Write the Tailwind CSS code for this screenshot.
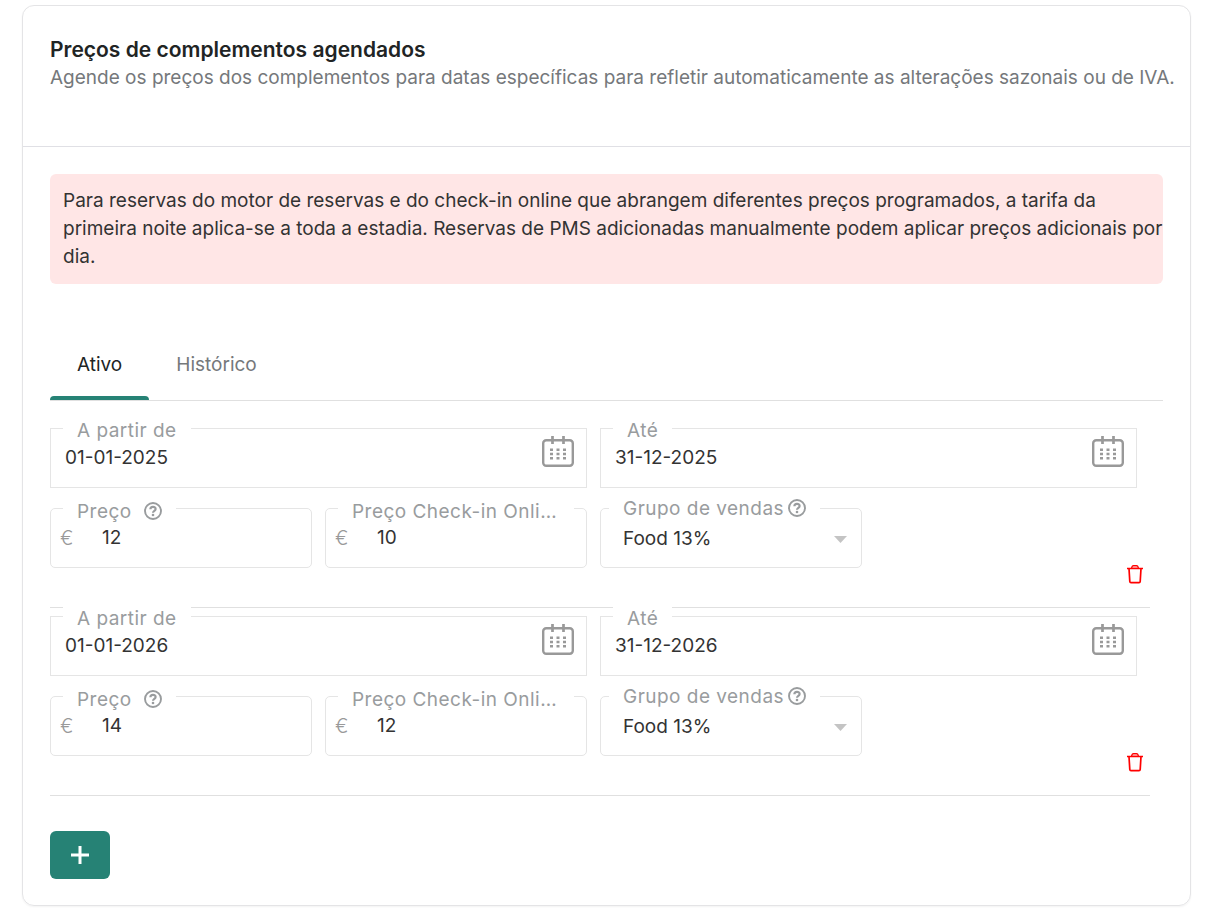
<!DOCTYPE html>
<html lang="pt">
<head>
  <meta charset="UTF-8" />
  <meta name="viewport" content="width=device-width, initial-scale=1.0"/>
  <title>Preços de complementos agendados</title>
  <script src="https://cdn.jsdelivr.net/npm/@tailwindcss/browser@4"></script>
</head>
<body class="bg-white font-['Inter',sans-serif] text-[19px]/7 text-[#333333]">

  <!-- Shared icons -->
  <svg class="hidden" aria-hidden="true">
    <symbol id="icon-calendar" viewBox="0 0 32 32">
      <rect x="1.200" y="4.200" width="29.600" height="25.600" rx="3" fill="none" stroke="currentColor" stroke-width="2.400"/>
      <path d="M10.500 0v8M21.500 0v8" fill="none" stroke="currentColor" stroke-width="2.700"/>
      <path d="M9.500 12.500v11M16 12.500v11M22.500 12.500v11" fill="none" stroke="currentColor" stroke-width="3" stroke-dasharray="2.500 1.700"/>
    </symbol>
    <symbol id="icon-help" viewBox="0 0 18 18">
      <circle cx="9" cy="9" r="8" fill="none" stroke="currentColor" stroke-width="1.900"/>
      <path d="M6.400 7.300C6.400 4 11.600 4 11.600 7C11.600 8.800 9 8.800 9 10.800" fill="none" stroke="currentColor" stroke-width="2.200"/>
      <circle cx="9" cy="13" r="1.300" fill="currentColor"/>
    </symbol>
    <symbol id="icon-trash" viewBox="0 0 16 20">
      <path d="M0 4.500h16M2 4.500l.8 13q.1 1.200 1.200 1.200h8q1.100 0 1.200-1.200l.8-13" fill="none" stroke="currentColor" stroke-width="1.700"/>
      <path d="M4.500 4.500q.5-2.800 2-2.800h3q1.500 0 2 2.800" fill="currentColor" fill-opacity=".3" stroke="currentColor" stroke-width="1.300"/>
    </symbol>
  </svg>

  <main class="mt-[5px] mr-[21px] mb-3 ml-[22px] rounded-xl border border-[#e4e4e6] shadow-xs">

    <!-- Header -->
    <header class="border-b border-[#e0e0e5] pt-[30px] pr-3 pb-[54px] pl-[27px]">
      <h1 class="text-[21px]/7 font-semibold text-[#212424]">Preços de complementos agendados</h1>
      <p class="text-[#75787b]">Agende os preços dos complementos para datas específicas para refletir automaticamente as alterações sazonais ou de IVA.</p>
    </header>

    <div class="px-[27px] pt-[27px] pb-[26px]">
      <p class="rounded-md bg-[#ffe6e6] py-[13px] pl-[13px]">Para reservas do motor de reservas e do check-in online que abrangem diferentes preços programados, a tarifa da primeira noite aplica-se a toda a estadia. Reservas de PMS adicionadas manualmente podem aplicar preços adicionais por dia.</p>

      <!-- Tabs -->
      <div role="tablist" class="mt-[45px] flex border-b border-[#e0e0e0]">
        <button role="tab" aria-selected="true" class="relative h-[71px] px-[27px] text-[#212424] after:absolute after:inset-x-0 after:bottom-0 after:h-1 after:rounded-t after:bg-[#268275]">Ativo</button>
        <button role="tab" aria-selected="false" class="h-[71px] px-[27px] text-[#75787b]">Histórico</button>
      </div>

      <form class="mt-[19px]">
        <!-- 2025 -->
        <section class="mr-[13px] border-b border-[#e0e0e0] pt-2 pb-[23px]">
          <div class="mr-[13px] grid grid-cols-4 gap-x-[13px] gap-y-5">
            <div class="relative col-span-2 h-[60px] border border-[#e5e5e5]">
              <label for="from-1" class="absolute -top-3 left-3 bg-white px-3.5 tracking-wide text-[#999c9e]">A partir de</label>
              <input id="from-1" value="01-01-2025" class="h-full w-full px-3.5 pb-0.5 outline-none">
              <button type="button" aria-label="Abrir calendário" class="absolute top-[7px] right-3 text-[#999999]"><svg class="size-8"><use href="#icon-calendar"/></svg></button>
            </div>
            <div class="relative col-span-2 h-[60px] border border-[#e5e5e5]">
              <label for="to-1" class="absolute -top-3 left-3 bg-white px-3.5 tracking-wide text-[#999c9e]">Até</label>
              <input id="to-1" value="31-12-2025" class="h-full w-full px-3.5 pb-0.5 outline-none">
              <button type="button" aria-label="Abrir calendário" class="absolute top-[7px] right-3 text-[#999999]"><svg class="size-8"><use href="#icon-calendar"/></svg></button>
            </div>
            <div class="relative flex h-[60px] items-center rounded-[5px] border border-[#e5e5e5]">
              <label for="price-1" class="absolute -top-[11px] left-3 flex items-center gap-3 bg-white px-3.5 tracking-wide text-[#999c9e]">Preço <svg class="mb-0.5 size-[18px]"><use href="#icon-help"/></svg></label>
              <span class="w-[51px] shrink-0 pl-[9px] text-xl font-light text-[#999999]">€</span>
              <input id="price-1" value="12" class="h-full w-full min-w-0 pb-0.5 outline-none">
            </div>
            <div class="relative flex h-[60px] items-center rounded-[5px] border border-[#e5e5e5]">
              <label for="online-1" class="absolute inset-x-3 -top-[11px] bg-white px-3.5 tracking-wide text-[#999c9e]"><span class="block truncate">Preço Check-in Online</span></label>
              <span class="w-[51px] shrink-0 pl-[9px] text-xl font-light text-[#999999]">€</span>
              <input id="online-1" value="10" class="h-full w-full min-w-0 pb-0.5 outline-none">
            </div>
            <div class="relative h-[60px] rounded-[5px] border border-[#e5e5e5]">
              <label for="group-1" class="absolute -top-3.5 left-2 flex items-center gap-1 bg-white px-3.5 tracking-wide whitespace-nowrap text-[#999c9e]">Grupo de vendas <svg class="mb-0.5 size-[18px]"><use href="#icon-help"/></svg></label>
              <select id="group-1" class="h-full w-full appearance-none px-[22px] pt-0.5 outline-none"><option>Food 13%</option></select>
              <svg class="pointer-events-none absolute top-[27px] right-3.5 h-[7px] w-[13px] text-[#c4c4c4]" viewBox="0 0 13 7"><path d="M0 0h13L6.500 7z" fill="currentColor"/></svg>
            </div>
          </div>
          <div class="-mt-1 mr-[7px] flex justify-end">
            <button type="button" aria-label="Eliminar" class="text-[#ff0000]"><svg class="h-5 w-4"><use href="#icon-trash"/></svg></button>
          </div>
        </section>

        <!-- 2026 -->
        <section class="mr-[13px] border-b border-[#e0e0e0] pt-2 pb-[23px]">
          <div class="mr-[13px] grid grid-cols-4 gap-x-[13px] gap-y-5">
            <div class="relative col-span-2 h-[60px] border border-[#e5e5e5]">
              <label for="from-2" class="absolute -top-3 left-3 bg-white px-3.5 tracking-wide text-[#999c9e]">A partir de</label>
              <input id="from-2" value="01-01-2026" class="h-full w-full px-3.5 pb-0.5 outline-none">
              <button type="button" aria-label="Abrir calendário" class="absolute top-[7px] right-3 text-[#999999]"><svg class="size-8"><use href="#icon-calendar"/></svg></button>
            </div>
            <div class="relative col-span-2 h-[60px] border border-[#e5e5e5]">
              <label for="to-2" class="absolute -top-3 left-3 bg-white px-3.5 tracking-wide text-[#999c9e]">Até</label>
              <input id="to-2" value="31-12-2026" class="h-full w-full px-3.5 pb-0.5 outline-none">
              <button type="button" aria-label="Abrir calendário" class="absolute top-[7px] right-3 text-[#999999]"><svg class="size-8"><use href="#icon-calendar"/></svg></button>
            </div>
            <div class="relative flex h-[60px] items-center rounded-[5px] border border-[#e5e5e5]">
              <label for="price-2" class="absolute -top-[11px] left-3 flex items-center gap-3 bg-white px-3.5 tracking-wide text-[#999c9e]">Preço <svg class="mb-0.5 size-[18px]"><use href="#icon-help"/></svg></label>
              <span class="w-[51px] shrink-0 pl-[9px] text-xl font-light text-[#999999]">€</span>
              <input id="price-2" value="14" class="h-full w-full min-w-0 pb-0.5 outline-none">
            </div>
            <div class="relative flex h-[60px] items-center rounded-[5px] border border-[#e5e5e5]">
              <label for="online-2" class="absolute inset-x-3 -top-[11px] bg-white px-3.5 tracking-wide text-[#999c9e]"><span class="block truncate">Preço Check-in Online</span></label>
              <span class="w-[51px] shrink-0 pl-[9px] text-xl font-light text-[#999999]">€</span>
              <input id="online-2" value="12" class="h-full w-full min-w-0 pb-0.5 outline-none">
            </div>
            <div class="relative h-[60px] rounded-[5px] border border-[#e5e5e5]">
              <label for="group-2" class="absolute -top-3.5 left-2 flex items-center gap-1 bg-white px-3.5 tracking-wide whitespace-nowrap text-[#999c9e]">Grupo de vendas <svg class="mb-0.5 size-[18px]"><use href="#icon-help"/></svg></label>
              <select id="group-2" class="h-full w-full appearance-none px-[22px] pt-0.5 outline-none"><option>Food 13%</option></select>
              <svg class="pointer-events-none absolute top-[27px] right-3.5 h-[7px] w-[13px] text-[#c4c4c4]" viewBox="0 0 13 7"><path d="M0 0h13L6.500 7z" fill="currentColor"/></svg>
            </div>
          </div>
          <div class="-mt-1 mr-[7px] flex justify-end">
            <button type="button" aria-label="Eliminar" class="text-[#ff0000]"><svg class="h-5 w-4"><use href="#icon-trash"/></svg></button>
          </div>
        </section>

        <button type="button" aria-label="Adicionar" class="mt-[35px] flex h-12 w-[60px] items-center justify-center rounded-md bg-[#268275] text-white">
          <svg class="size-[18px]" viewBox="0 0 18 18"><path d="M9 0v18M0 9h18" fill="none" stroke="currentColor" stroke-width="3"/></svg>
        </button>
      </form>
    </div>
  </main>

</body>
</html>
